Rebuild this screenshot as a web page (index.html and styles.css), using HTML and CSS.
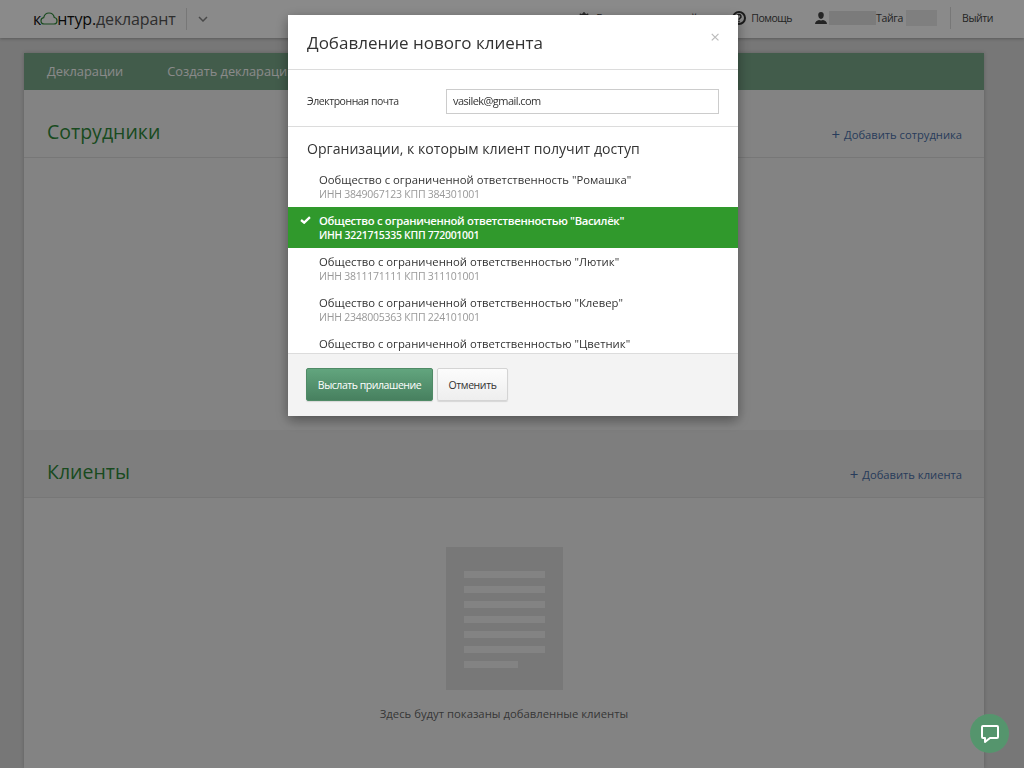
FILE: index.html
```html
<!DOCTYPE html>
<html lang="ru">
<head>
<meta charset="utf-8">
<title>Контур.Декларант</title>
<link rel="stylesheet" href="styles.css">
</head>
<body>
<header class="topbar">
  <div class="logo">
    <span class="logo-dark">к<svg class="logo-cloud" width="18" height="13" viewBox="0 0 18 13"><path d="M4.500 12C2.300 12 1 10.500 1 8.700 1 7 2.200 5.800 3.700 5.600 4.400 2.800 6.500 1 9 1c2.600 0 4.700 1.800 5.300 4.500 1.600.2 2.700 1.500 2.700 3.200 0 1.900-1.400 3.300-3.400 3.300z" fill="none" stroke="#2f8a3a" stroke-width="1.200"/></svg>нтур.</span><span class="logo-light">декларант</span>
  </div>
  <span class="vsep"></span>
  <svg class="chev" width="10" height="6" viewBox="0 0 10 6"><path d="M1 1l4 4 4-4" fill="none" stroke="#888" stroke-width="1.500"/></svg>
  <div class="topnav">
    <span class="topitem reports"><svg width="12" height="12" viewBox="0 0 12 12"><circle cx="6" cy="6" r="3.500" fill="none" stroke="#444" stroke-width="2.500"/><path d="M6 0v12M0 6h12M1.800 1.800l8.400 8.400M10.200 1.800l-8.400 8.400" stroke="#444" stroke-width="1.300"/></svg>Бланки деклараций</span>
    <span class="topitem help"><svg width="14" height="14" viewBox="0 0 14 14"><circle cx="7" cy="7" r="6" fill="none" stroke="#333" stroke-width="2"/><path d="M5 5.500a2 2 0 1 1 3 1.700c-.7.400-1 .8-1 1.500M7 9.700v1.500" fill="none" stroke="#333" stroke-width="1.500"/></svg>Помощь</span>
    <span class="topitem user"><svg width="12" height="12" viewBox="0 0 12 12"><path d="M6 0c1.800 0 2.800 1.300 2.800 3S7.800 7 6 7 3.200 4.700 3.200 3 4.200 0 6 0zM0 12c0-2.500 2-3.200 4-4l2 .6 2-.6c2 .8 4 1.500 4 4z" fill="#444"/></svg><span class="blur-a"></span>Тайга<span class="blur-b"></span></span>
    <span class="vsep logout-sep"></span>
    <span class="topitem logout">Выйти</span>
  </div>
</header>

<main class="card">
  <nav class="mainnav">
    <a>Декларации</a>
    <a>Создать декларацию</a>
  </nav>

  <section class="section">
    <div class="section-head first">
      <h2>Сотрудники</h2>
      <a class="add"><b>+</b>Добавить сотрудника</a>
    </div>
    <div class="section-body staff"></div>
  </section>

  <section class="section">
    <div class="section-head">
      <h2>Клиенты</h2>
      <a class="add"><b>+</b>Добавить клиента</a>
    </div>
    <div class="section-body clients">
      <div class="doc">
        <i></i><i></i><i></i><i></i><i></i><i></i><i class="short"></i>
      </div>
      <p class="empty">Здесь будут показаны добавленные клиенты</p>
    </div>
  </section>
</main>

<div class="overlay"></div>

<div class="modal">
  <div class="modal-head">
    <h1>Добавление нового клиента</h1>
    <span class="close">×</span>
  </div>
  <div class="email-row">
    <label>Электронная почта</label>
    <div class="input">vasilek@gmail.com</div>
  </div>
  <div class="orgs">
    <h3>Организации, к которым клиент получит доступ</h3>
    <ul class="org-list">
      <li><span class="name">Ообщество с ограниченной ответственность "Ромашка"</span><span class="req">ИНН 3849067123 КПП 384301001</span></li>
      <li class="active"><svg class="check" width="11" height="8" viewBox="0 0 12 9"><path d="M1 4.500l3.500 3L11 1.200" fill="none" stroke="#fff" stroke-width="2.600"/></svg><span class="name">Общество с ограниченной ответственностью "Василёк"</span><span class="req">ИНН 3221715335 КПП 772001001</span></li>
      <li><span class="name">Общество с ограниченной ответственностью "Лютик"</span><span class="req">ИНН 3811171111 КПП 311101001</span></li>
      <li><span class="name">Общество с ограниченной ответственностью "Клевер"</span><span class="req">ИНН 2348005363 КПП 224101001</span></li>
      <li class="peek"><span class="name">Общество с ограниченной ответственностью "Цветник"</span></li>
    </ul>
  </div>
  <div class="modal-foot">
    <button class="btn primary">Выслать прилашение</button>
    <button class="btn">Отменить</button>
  </div>
</div>

<div class="chat">
  <svg width="18" height="18" viewBox="0 0 18 18"><path d="M2 1h14a1 1 0 0 1 1 1v10a1 1 0 0 1-1 1H9l-5 4v-4H2a1 1 0 0 1-1-1V2a1 1 0 0 1 1-1z" fill="none" stroke="#fff" stroke-width="2" stroke-linejoin="round"/></svg>
</div>
</body>
</html>
```
FILE: styles.css
```css
* { box-sizing: border-box; }
html, body { height: 100%; }
body {
  margin: 0;
  height: 768px;
  overflow: hidden;
  background: #dcdcdc;
  font-family: "Open Sans", "Noto Sans", sans-serif;
  font-size: 12px;
  color: #333;
}
h1, h2, h3, p, ul { margin: 0; padding: 0; font-weight: 400; }

.topbar {
  height: 38px;
  background: #fff;
  box-shadow: 0 1px 3px rgba(0,0,0,.25);
  display: flex;
  align-items: center;
  padding-left: 33px;
}
.logo { font-size: 16px; line-height: 36px; white-space: nowrap; letter-spacing: -.15px; width: 153px; }
.logo-dark { color: #111; }
.logo-light { color: #555; }
.logo-cloud { vertical-align: 0; margin: 0 -1px 0 -1px; }
.vsep { width: 1px; height: 22px; background: #ddd; }
.chev { margin-left: 11px; }
.topnav { margin-left: auto; display: flex; align-items: center; height: 38px; padding-bottom: 2px; color: #444; font-size: 10.500px; letter-spacing: -.3px; }
.topitem { display: flex; align-items: center; white-space: nowrap; }
.topitem svg { margin-right: 6px; }
.reports { margin-right: 35px; letter-spacing: 0; }
.help { margin-right: 23px; letter-spacing: -.5px; }
.help svg { margin-right: 5px; }
.user { margin-right: 13px; }
.user svg { margin-right: 2px; }
.blur-a { width: 47px; height: 14px; background: #e4e4e4; }
.blur-b { width: 31px; height: 16px; background: #eaeaea; margin-left: 3px; }
.logout-sep { margin-right: 11px; }
.logout { margin-right: 31px; letter-spacing: -.45px; }

.card {
  width: 960px;
  margin: 15px 0 0 24px;
  background: #f3f3f3;
  box-shadow: 0 0 4px rgba(0,0,0,.2);
}
.mainnav {
  height: 37px;
  background: #7aaa8b;
  display: flex;
  align-items: center;
  padding: 0 0 2px 23px;
  gap: 44px;
  color: #fff;
  font-size: 12.800px;
}
.section-head {
  height: 68px;
  background: #e9e9e9;
  border-bottom: 1px solid #dcdcdc;
  display: flex;
  align-items: center;
  justify-content: space-between;
  padding: 16px 22px 0 23px;
}
.section-head.first { background: #f3f3f3; }
.section-head h2 { font-size: 19.500px; color: #2f8a3a; line-height: 26px; }
.add { color: #4a6fa8; font-size: 11.200px; margin-top: 6px; display: flex; align-items: center; gap: 4px; }
.add b { font-weight: 400; font-size: 15px; line-height: 15px; }
.staff { height: 272px; }
.clients { height: 270px; display: flex; flex-direction: column; align-items: center; padding-top: 49px; }
.doc {
  width: 117px;
  height: 143px;
  background: #dedede;
  padding: 24px 18px 0;
  display: flex;
  flex-direction: column;
  gap: 8px;
  margin-left: 1px;
}
.doc i { display: block; height: 7px; background: #f3f3f3; }
.doc i.short { width: 54px; }
.empty { margin-top: 16px; color: #666; font-size: 11.300px; }

.overlay { position: fixed; inset: 0; background: rgba(0,0,0,.46); }

.modal {
  position: fixed;
  left: 288px;
  top: 15px;
  width: 450px;
  height: 401px;
  background: #fff;
  box-shadow: 0 4px 12px rgba(0,0,0,.4);
  display: flex;
  flex-direction: column;
}
.modal-head {
  height: 55px;
  border-bottom: 1px solid #dcdcdc;
  padding: 14px 19px 0;
  position: relative;
}
.modal-head h1 { font-size: 17px; line-height: 28px; color: #333; }
.close { position: absolute; right: 18px; top: 12px; color: #bbb; font-size: 17px; line-height: 20px; }
.email-row {
  height: 57px;
  border-bottom: 1px solid #dcdcdc;
  display: flex;
  align-items: center;
  padding: 0 19px;
}
.email-row label { width: 139px; font-size: 10.500px; letter-spacing: -.45px; color: #333; margin-top: 6px; }
.input {
  width: 273px;
  height: 25px;
  border: 1px solid #ccc;
  padding: 0 6px;
  line-height: 22px;
  font-size: 11px;
  letter-spacing: -.55px;
  color: #333;
  margin-top: 6px;
}
.orgs { flex: 1; min-height: 0; overflow: hidden; }
.orgs h3 { font-size: 14.100px; line-height: 20px; padding: 12px 19px 7px; color: #333; }
.org-list { list-style: none; }
.org-list li { height: 41px; padding: 6px 19px 0 31px; position: relative; }
.org-list li.peek { height: 23px; }
.name, .req { display: block; white-space: nowrap; }
.name { font-size: 11.300px; color: #333; line-height: 16px; }
.req { font-size: 10.500px; letter-spacing: -.24px; color: #999; line-height: 13px; }
.org-list li.active { background: #30992c; font-weight: 600; }
.org-list li.active .name { color: #fff; letter-spacing: -.33px; }
.org-list li.active .req { color: #fff; letter-spacing: -.3px; }
.check { position: absolute; left: 12px; top: 9px; }
.modal-foot {
  height: 63px;
  background: #f3f3f3;
  border-top: 1px solid #dcdcdc;
  padding: 14px 18px 0;
  display: flex;
  gap: 4px;
  align-items: flex-start;
}
.btn {
  height: 33px;
  width: 71px;
  padding: 0;
  border: 1px solid #d4d4d4;
  border-radius: 2px;
  background: linear-gradient(#fcfcfc, #eee);
  font: 10.500px "Open Sans", "Noto Sans", sans-serif;
  letter-spacing: -.4px;
  color: #333;
  box-shadow: 0 1px 1px rgba(0,0,0,.12);
}
.btn.primary {
  width: 127px;
  border-color: #4f8a66;
  color: #fff;
  letter-spacing: -.45px;
  background: linear-gradient(#62a57e, #47805f);
}
.chat {
  position: fixed;
  left: 970px;
  top: 714px;
  width: 39px;
  height: 39px;
  border-radius: 50%;
  background: #55956d;
  display: flex;
  align-items: center;
  justify-content: center;
}
```
